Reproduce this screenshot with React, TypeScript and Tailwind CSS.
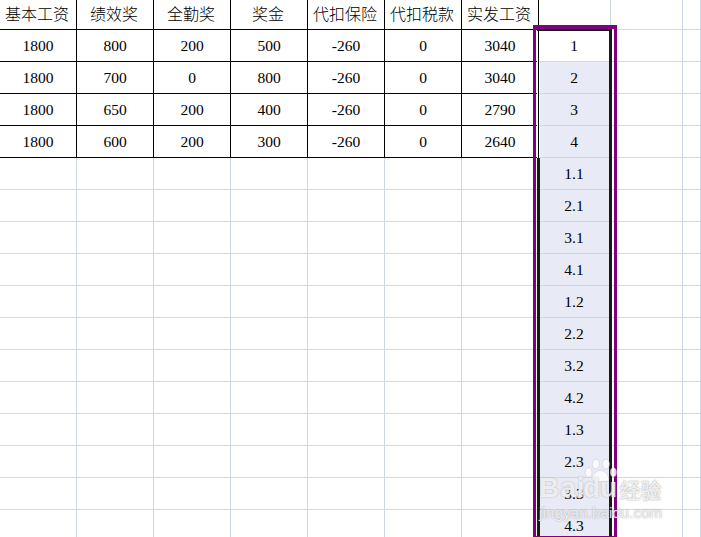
const COLS = ["w-[77px]","w-[77px]","w-[77px]","w-[77px]","w-[77px]","w-[77px]","w-[77px]","w-[72px]","w-[72px]","w-[18px]"];
const HEAD = ["基本工资","绩效奖","全勤奖","奖金","代扣保险","代扣税款","实发工资"];
const DATA = [
  ["1800","800","200","500","-260","0","3040"],
  ["1800","700","0","800","-260","0","3040"],
  ["1800","650","200","400","-260","0","2790"],
  ["1800","600","200","300","-260","0","2640"],
];
const SEQ = ["1","2","3","4","1.1","2.1","3.1","4.1","1.2","2.2","3.2","4.2","1.3","2.3","3.3","4.3"];

function Row({ head, cells, seq, index }: { head?: boolean; cells?: string[]; seq?: string; index: number }) {
  const black = head || index < 4;
  return (
    <div className={`flex ${head ? "h-[30px]" : "h-[32px]"}`}>
      {COLS.map((w, i) => {
        const inTable = i < 7 && black;
        const isSeq = i === 7;
        const tint = isSeq && !head && index > 0;
        const border = inTable
          ? "border-r border-b border-r-black border-b-black"
          : "border-r border-b border-r-[#cfd7e6] border-b-[#cfd7e6]";
        const txt = head ? (i < 7 ? HEAD[i] : "") : i < 7 ? cells?.[i] ?? "" : isSeq ? seq : "";
        return (
          <div
            key={i}
            className={`${w} shrink-0 flex items-center justify-center ${border} ${tint ? "bg-[#e8eaf5]" : "bg-white"} ${head ? "pb-1 pr-[2px] text-[16px] font-['Noto_Sans_CJK_SC',sans-serif] font-light" : "pt-px text-[15.5px]"} ${isSeq ? "pr-px" : ""} text-black`}
          >
            {txt}
          </div>
        );
      })}
    </div>
  );
}

function Watermark() {
  return (
    <div className="absolute left-[539px] top-[461px] w-[124px] flex flex-col pointer-events-none font-['Liberation_Sans',sans-serif]">
      <div className="flex items-end h-[40px]">
        <div className="text-[28px] leading-[26px] tracking-[1px] font-bold text-white/80 [text-shadow:0_0_1.5px_rgba(110,110,110,0.6)]">Bai</div>
        <div className="flex flex-col items-center ml-[-4px] w-[37px]">
          <svg className="mb-[-9px]" width="35" height="27" viewBox="0 0 38 26">
            <g fill="#fff" fillOpacity="0.82" stroke="#aaa" strokeOpacity="0.5" strokeWidth="0.6">
              <ellipse cx="6" cy="15" rx="3.6" ry="5" />
              <ellipse cx="14" cy="6" rx="3.8" ry="5.2" />
              <ellipse cx="25" cy="6" rx="3.8" ry="5.2" />
              <ellipse cx="33" cy="15" rx="3.4" ry="5" />
              <path d="M19 13c-4 0-8 4-9 8-1 3 2 4 5 4h8c3 0 6-1 5-4-1-4-5-8-9-8z" />
            </g>
          </svg>
          <div className="text-[28px] leading-[26px] font-bold text-white/80 [text-shadow:0_0_1.5px_rgba(110,110,110,0.6)]">du</div>
        </div>
        <div className="ml-[1px] text-[21px] leading-[24px] whitespace-nowrap font-medium text-white/85 font-['Noto_Sans_CJK_SC',sans-serif] [text-shadow:0_0_1.5px_rgba(100,100,100,0.8)]">经验</div>
      </div>
      <div className="mt-[3px] text-[15px] leading-[18px] whitespace-nowrap tracking-[0.15px] text-white/80 [text-shadow:0_0_1.5px_rgba(100,100,100,0.7)]">jingyan.baidu.com</div>
    </div>
  );
}

function Selection() {
  return (
    <div className="absolute left-[533px] top-[25px] w-[84px] h-[512px] flex border-x-[3px] border-t-4 border-b border-[#800080] pl-px pr-[2px] pointer-events-none">
      <div className="flex-1 flex flex-col border-t-2 border-r-[3px] border-[#1a1a14]">
        <div className="w-[3px] h-[127px] shrink-0 border-x border-white" />
        <div className="w-[3px] flex-1 bg-[#1a1a14]" />
      </div>
    </div>
  );
}

export default function App() {
  return (
    <div className="relative w-[701px] h-[537px] overflow-hidden bg-white font-['Liberation_Serif',serif]">
      <Row head index={-1} />
      {SEQ.map((s, i) => (
        <Row key={i} index={i} cells={DATA[i]} seq={s} />
      ))}
      <Selection />
      <Watermark />
    </div>
  );
}
